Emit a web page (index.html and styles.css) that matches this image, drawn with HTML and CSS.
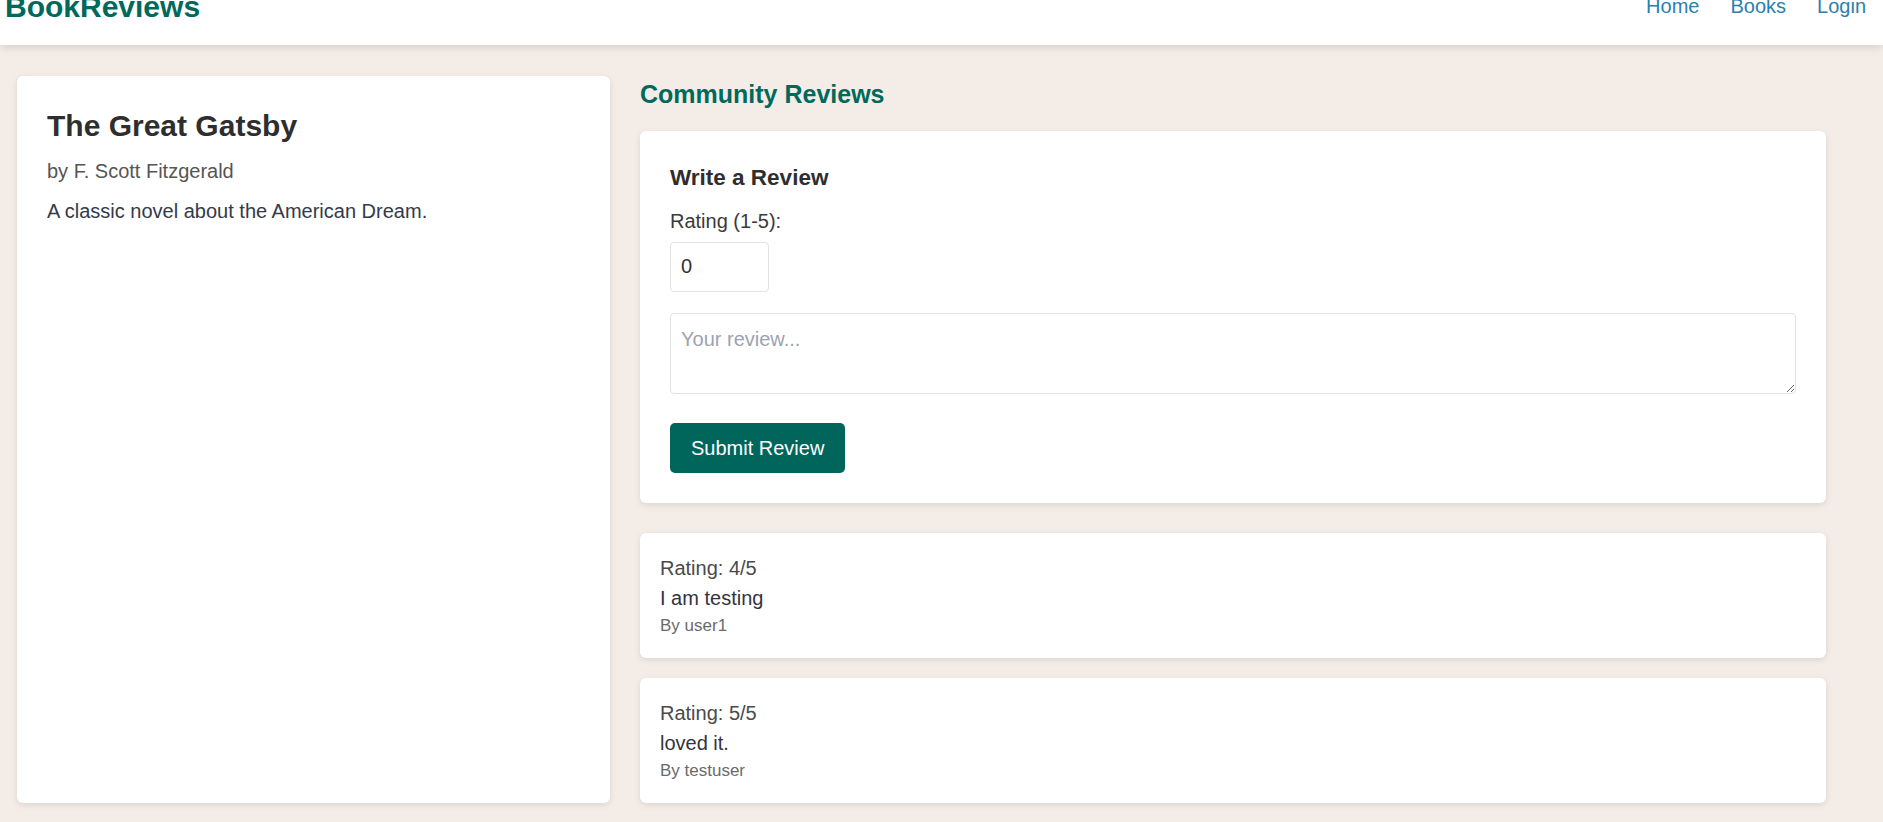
FILE: index.html
```html
<!DOCTYPE html>
<html lang="en">
<head>
<meta charset="utf-8">
<title>BookReviews</title>
<link rel="stylesheet" href="styles.css">
</head>
<body>
<header class="site-header">
  <div class="header-row">
    <a class="logo" href="#">BookReviews</a>
    <nav class="nav">
      <a href="#">Home</a>
      <a href="#">Books</a>
      <a href="#">Login</a>
    </nav>
  </div>
</header>
<main class="layout">
  <section class="card book-card">
    <h2 class="book-title">The Great Gatsby</h2>
    <p class="book-author">by F. Scott Fitzgerald</p>
    <p class="book-desc">A classic novel about the American Dream.</p>
  </section>
  <section class="reviews">
    <h2 class="reviews-title">Community Reviews</h2>
    <form class="card review-form">
      <h3 class="form-title">Write a Review</h3>
      <label class="form-label" for="rating">Rating (1-5):</label>
      <input class="rating-input" id="rating" type="number" value="0">
      <textarea class="review-text" placeholder="Your review..."></textarea>
      <button class="submit-btn" type="button">Submit Review</button>
    </form>
    <div class="review-list">
      <article class="review-card">
        <div class="review-rating">Rating: 4/5</div>
        <div class="review-body">I am testing</div>
        <div class="review-author">By user1</div>
      </article>
      <article class="review-card">
        <div class="review-rating">Rating: 5/5</div>
        <div class="review-body">loved it.</div>
        <div class="review-author">By testuser</div>
      </article>
    </div>
  </section>
</main>
</body>
</html>
```
FILE: styles.css
```css
* {
  box-sizing: border-box;
}

html, body {
  margin: 0;
  padding: 0;
}

body {
  background: #f4ece6;
  font-family: "Liberation Sans", Arial, sans-serif;
  font-size: 20px;
  line-height: 1.5;
  color: #333;
}

a {
  text-decoration: none;
}

.site-header {
  height: 45px;
  background: #fff;
  display: flex;
  flex-direction: column;
  overflow: hidden;
  box-shadow: 0 2px 9px rgba(0, 0, 0, 0.13);
  position: relative;
  z-index: 1;
}

.header-row {
  display: flex;
  justify-content: space-between;
  align-items: center;
  margin-top: -16.2px;
  padding: 0 17px 0 5px;
}

.logo {
  font-size: 30px;
  font-weight: bold;
  line-height: 45px;
  color: #00695c;
}

.nav {
  display: flex;
  gap: 31px;
}

.nav a {
  color: #2a7fae;
  font-size: 20px;
  line-height: 30px;
}

.layout {
  display: grid;
  grid-template-columns: 1fr 2fr;
  gap: 30px;
  padding: 31px 57px 16px 17px;
  align-items: stretch;
}

.card {
  background: #fff;
  border-radius: 6px;
  box-shadow: 0 2px 6px rgba(0, 0, 0, 0.1);
}

.book-card {
  padding: 30px;
}

.book-title {
  margin: 0 0 10.4px;
  font-size: 30px;
  line-height: 40px;
  font-weight: bold;
  color: #2e2e2e;
}

.book-author {
  margin: 0 0 10px;
  color: #555;
}

.book-desc {
  margin: 0;
  color: #333a48;
}

.reviews {
  display: flex;
  flex-direction: column;
}

.reviews-title {
  margin: 0 0 17.5px;
  font-size: 25px;
  line-height: 37.5px;
  font-weight: bold;
  color: #00695c;
}

.review-form {
  padding: 30px;
  margin: 0 0 30px;
  display: flex;
  flex-direction: column;
  align-items: flex-start;
}

.form-title {
  margin: 0 0 11.6px;
  font-size: 22.5px;
  line-height: 33.75px;
  font-weight: bold;
  color: #2e2e2e;
}

.form-label {
  display: block;
  margin: 0 0 5.6px;
  color: #3a3a3a;
}

.rating-input {
  display: block;
  width: 99px;
  height: 50px;
  margin: 0 0 21px;
  padding: 9px 10px;
  border: 1px solid #e2e2e2;
  border-radius: 4px;
  font-family: inherit;
  font-size: 20px;
  line-height: 30px;
  color: #333;
  background: #fff;
}

.review-text {
  display: block;
  width: 100%;
  height: 81px;
  margin: 0 0 29px;
  padding: 10px;
  border: 1px solid #e2e2e2;
  border-radius: 4px;
  font-family: inherit;
  font-size: 20px;
  line-height: 30px;
  color: #333;
  background: #fff;
}

.review-text::placeholder {
  color: #9ca3af;
}

.submit-btn {
  display: block;
  height: 50px;
  padding: 0 21px;
  border: 0;
  border-radius: 5px;
  background: #00665c;
  color: #fff;
  font-family: inherit;
  font-size: 20px;
  line-height: 30px;
}

.review-list {
  display: flex;
  flex-direction: column;
  gap: 20px;
}

.review-card {
  background: #fff;
  border-radius: 6px;
  box-shadow: 0 2px 6px rgba(0, 0, 0, 0.1);
  padding: 20px 20px 19.5px;
}

.review-rating {
  color: #4a4a4a;
  line-height: 30px;
}

.review-body {
  color: #333340;
  line-height: 30px;
}

.review-author {
  color: #6a6a6a;
  font-size: 17px;
  line-height: 25.5px;
}
```
